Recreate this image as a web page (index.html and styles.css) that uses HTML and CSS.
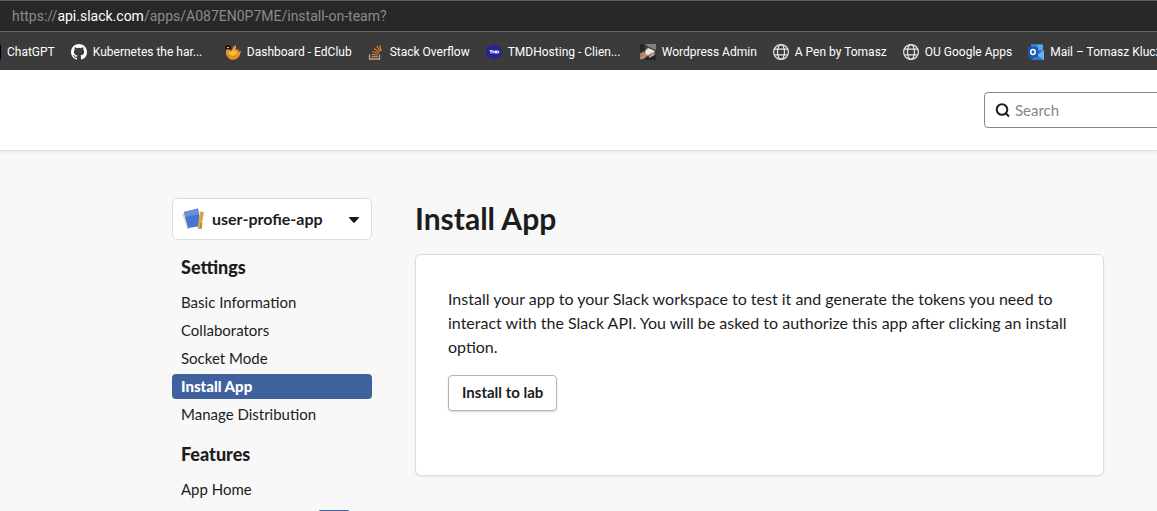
FILE: index.html
```html
<!DOCTYPE html>
<html lang="en">
<head>
<meta charset="utf-8">
<meta name="viewport" content="width=device-width, initial-scale=1">
<title>Install App</title>
<link rel="stylesheet" href="styles.css">
</head>
<body>
<div class="address-bar"><span>https://<b class="host">api.slack.com</b>/apps/A087EN0P7ME/install-on-team?</span></div>
<nav class="bookmarks" aria-label="Bookmarks">
  <a class="bookmark" href="#"><span class="icon icon-chatgpt"></span><span class="label">ChatGPT</span></a>
  <a class="bookmark" href="#">
    <svg class="icon" viewBox="0 0 16 16" aria-hidden="true"><path fill="#fff" d="M8 0C3.58 0 0 3.58 0 8c0 3.54 2.29 6.53 5.47 7.59.4.07.55-.17.55-.38 0-.19-.01-.82-.01-1.49-2.01.37-2.53-.49-2.69-.94-.09-.23-.48-.94-.82-1.13-.28-.15-.68-.52-.01-.53.63-.01 1.08.58 1.23.82.72 1.21 1.87.87 2.33.66.07-.52.28-.87.51-1.07-1.78-.2-3.64-.89-3.64-3.95 0-.87.31-1.59.82-2.15-.08-.2-.36-1.02.08-2.12 0 0 .67-.21 2.2.82a7.6 7.6 0 0 1 4 0c1.53-1.04 2.2-.82 2.2-.82.44 1.1.16 1.92.08 2.12.51.56.82 1.27.82 2.15 0 3.07-1.87 3.75-3.65 3.95.29.25.54.73.54 1.48 0 1.07-.01 1.93-.01 2.2 0 .21.15.46.55.38A8.01 8.01 0 0 0 16 8c0-4.42-3.58-8-8-8z"/></svg>
    <span class="label truncated">Kubernetes the har...</span></a>
  <a class="bookmark" href="#">
    <svg class="icon" viewBox="0 0 16 16" aria-hidden="true"><path fill="#e98f25" d="M1 6Q0 14 7 15.800Q13 16 15 11L16 7L13 7.500L14 5L11 6L11 1L8 3L7 6Q5 7 4 5Z"/><path fill="#f8bd48" d="M4 10Q8 14 13 9L10 9L13 7L9 7L10 4L7 7Q5 9 3 8Z"/><path fill="#171513" d="M0 2L4 1L6 3L5 6L3 4L1 6Z"/><path fill="#f0c367" d="M2 3h2v1H2z"/></svg>
    <span class="label">Dashboard - EdClub</span></a>
  <a class="bookmark" href="#">
    <svg class="icon" viewBox="0 0 16 16" aria-hidden="true"><path fill="none" stroke="#aaa" stroke-width="1.300" d="M1.500 10.500v4.500h10v-4.500"/><path fill="none" stroke="#e07b28" stroke-width="1.200" d="M3.500 12.700h6.500M3.600 10.300l6.500.7M4.300 7.500l6.200 2M6 4.600l5.300 3.700M8.600 2.200l3.900 5M11.700 1l1.600 6"/></svg>
    <span class="label">Stack Overflow</span></a>
  <a class="bookmark" href="#">
    <svg class="icon" viewBox="0 0 16 16" aria-hidden="true"><path fill="#25258f" d="M8 0l7 4v8l-7 4-7-4V4z" stroke="#25258f"/><path fill="none" stroke="#fff" stroke-width="1" d="M3.500 6.700h3M5 6.700V9.500M7 9.500V6.700l1.200 1.800 1.200-1.800v2.800M10.500 9V7h1.500l1 .7v.8l-1 .6z"/></svg>
    <span class="label truncated">TMDHosting - Clien...</span></a>
  <a class="bookmark" href="#">
    <svg class="icon" viewBox="0 0 16 16" aria-hidden="true"><path fill="#44423f" d="M0 0h16v16H0z"/><path fill="#78858e" d="M5 0h11v6L9 3z"/><path fill="#222426" d="M0 0h4l1 6-5 2zM5 15l7-5 4 1v5H5z"/><path fill="#c78c61" d="M0 13l4-4 3-3 5 1 3 2-2 2-6 1-4 3H0z"/><path fill="#eee6dc" d="M5 7l3-3 5 2 2 2-4 1-3 2-2-1z"/><path fill="#a6adb2" d="M0 10l4-2v1l-4 3zM9 12l5-2 1 1-6 3z"/></svg>
    <span class="label">Wordpress Admin</span></a>
  <a class="bookmark" href="#">
    <svg class="icon globe" viewBox="0 0 16 16" aria-hidden="true"><circle cx="8" cy="8" r="7.400"/><ellipse cx="8" cy="8" rx="3.500" ry="7.400"/><path d="M1.300 5.200h13.400M1.300 10.800h13.400"/></svg>
    <span class="label">A Pen by Tomasz</span></a>
  <a class="bookmark" href="#">
    <svg class="icon globe" viewBox="0 0 16 16" aria-hidden="true"><circle cx="8" cy="8" r="7.400"/><ellipse cx="8" cy="8" rx="3.500" ry="7.400"/><path d="M1.300 5.200h13.400M1.300 10.800h13.400"/></svg>
    <span class="label">OU Google Apps</span></a>
  <a class="bookmark" href="#">
    <svg class="icon" viewBox="0 0 16 16" aria-hidden="true"><path fill="#2e7fd2" d="M3 0h12v8H3z"/><path fill="#5aa6e6" d="M9 1h6v5H9z"/><path fill="#185abd" d="M2 8h13v7H2z"/><path fill="#3478cf" d="M16 6v10H3L9 11z"/><path fill="#6cb0ee" d="M9 11l7-5v10z"/><rect y="3" width="10" height="10" rx="1" fill="#1c56b4"/><ellipse cx="5" cy="8" rx="2.200" ry="2.500" fill="none" stroke="#fff" stroke-width="1.500"/></svg>
    <span class="label">Mail – Tomasz Klucz...</span></a>
</nav>
<header class="site-header">
  <label class="search">
    <svg class="search-icon" viewBox="0 0 16 16" aria-hidden="true"><circle cx="7" cy="7.500" r="5.300"/><path d="M11 11.500l3 3"/></svg>
    <input type="search" placeholder="Search" aria-label="Search">
  </label>
</header>
<div class="layout">
  <aside class="sidebar">
    <div class="app-picker">
      <svg class="app-icon" viewBox="0 0 22 22" aria-hidden="true"><path fill="#d8d8d8" d="M0 5.500l3-1 4.500 16-2 1z"/><path fill="#aaa" d="M2.500 6l1 0 4 14-1 .5z"/><path fill="#4774cf" d="M2 4L16 .500 19 18 6 20z"/><path fill="#6590df" d="M2 4L16 .500 17 6 3.500 9z"/><path fill="#d5a84c" d="M18 3.500l4 .5-3 17-3.500-.5z"/><path fill="#b88732" d="M18.500 15l2 0-1.200 6-2-.3z"/></svg>
      <select aria-label="App"><option>user-profie-app</option></select>
      <svg class="caret" viewBox="0 0 12 8" aria-hidden="true"><path d="M1.500 1h9q1 0 .3 1L7 6.200q-1 1-2 0L1.200 2q-.7-1 .3-1z"/></svg>
    </div>
    <h2>Settings</h2>
    <ul>
      <li><a href="#">Basic Information</a></li>
      <li><a href="#">Collaborators</a></li>
      <li><a href="#">Socket Mode</a></li>
      <li><a class="active" href="#" aria-current="page">Install App</a></li>
      <li><a href="#">Manage Distribution</a></li>
    </ul>
    <h2>Features</h2>
    <ul>
      <li><a href="#">App Home</a></li>
      <li class="badge-row"><span class="badge"></span></li>
    </ul>
  </aside>
  <main class="content">
    <h1>Install App</h1>
    <section class="card">
      <p>Install your app to your Slack workspace to test it and generate the tokens you need to interact with the Slack API. You will be asked to authorize this app after clicking an install option.</p>
      <button type="button">Install to lab</button>
    </section>
  </main>
</div>
</body>
</html>
```
FILE: styles.css
```css
* { box-sizing: border-box; }

body {
  margin: 0;
  height: 100vh;
  overflow: hidden;
  background: #f8f8f8;
  color: #1d1c1d;
  font: 15px/24px Lato, sans-serif;
}

a { color: inherit; text-decoration: none; }

.address-bar {
  height: 32px;
  padding: 0 12px;
  border-top: 1px solid #5c5c5c;
  border-bottom: 1px solid #666;
  background: #282828;
  color: #8b8b8b;
  font: 14px/30px Roboto, sans-serif;
}
.host { color: #fff; font-weight: 400; }

.bookmarks {
  display: flex;
  align-items: center;
  gap: 16px;
  height: 38px;
  margin-left: -15px;
  background: #3b3b3b;
  color: #fff;
  font: 12px/20px Roboto, sans-serif;
  overflow: hidden;
}
.bookmark { display: flex; flex: none; align-items: center; gap: 6px; padding-top: 1px; }
.label { white-space: nowrap; }
.truncated { min-width: 116px; }
.icon { flex: none; width: 16px; height: 16px; }
.icon-chatgpt { background: #000; border-radius: 2px; }
.globe { fill: none; stroke: #e8e8e8; stroke-width: 1.2; }

.site-header {
  display: flex;
  justify-content: flex-end;
  align-items: center;
  height: 81px;
  background: #fff;
  border-bottom: 1px solid #e0e0e0;
  box-shadow: 0 1px 3px rgba(0, 0, 0, 0.08);
}
.search {
  display: flex;
  align-items: center;
  gap: 4px;
  width: 200px;
  height: 36px;
  margin-right: -27px;
  padding-left: 10px;
  border: 1px solid #868686;
  border-radius: 4px;
}
.search-icon { flex: none; width: 16px; height: 16px; fill: none; stroke: #1d1c1d; stroke-width: 2; }
.search input {
  min-width: 0;
  padding: 0;
  border: 0;
  background: none;
  font: inherit;
}
.search input::placeholder { color: #868686; opacity: 1; }

.layout {
  display: flex;
  gap: 43px;
  padding: 47px 53px 0 172px;
}

.sidebar { flex: none; width: 200px; }
.app-picker { position: relative; }
.app-picker select {
  appearance: none;
  width: 100%;
  height: 42px;
  padding: 0 32px 0 39px;
  border: 1px solid #ddd;
  border-radius: 6px;
  background: #fff;
  color: inherit;
  font: bold 16px/24px Lato, sans-serif;
}
.app-icon { position: absolute; left: 10px; top: 10px; width: 22px; height: 22px; }
.caret { position: absolute; right: 12px; top: 18px; width: 12px; height: 8px; fill: #1d1c1d; pointer-events: none; }

.sidebar h2 {
  margin: 15px 0 11px;
  padding-left: 9px;
  font-size: 18px;
  font-weight: 900;
  line-height: 24px;
}
.sidebar ul {
  display: grid;
  gap: 3px;
  margin: 0;
  padding: 0;
  list-style: none;
}
.sidebar li a {
  display: block;
  padding-left: 9px;
  border-radius: 4px;
  line-height: 25px;
}
.sidebar li a.active { background: #3f629f; color: #fff; font-weight: 900; }
.badge-row { display: flex; justify-content: flex-end; padding: 5px 22px 0 0; }
.badge { width: 32px; height: 16px; border-radius: 3px; background: #3f629f; }

.content { flex: 1; min-width: 0; }
h1 { margin: 0 0 16px; font-size: 30px; line-height: 40px; }
.card {
  padding: 32px 32px 64px;
  border: 1px solid #ddd;
  border-radius: 6px;
  background: #fff;
  box-shadow: 0 1px 2px rgba(0, 0, 0, 0.08);
}
.card p { margin: 0 0 16px; font-size: 16px; }
.card button {
  height: 36px;
  padding: 0 13px 2px;
  border: 1px solid #b5b5b5;
  border-radius: 4px;
  background: #fff;
  color: inherit;
  font: bold 15px/24px Lato, sans-serif;
  box-shadow: 0 1px 2px rgba(0, 0, 0, 0.15);
}
```
